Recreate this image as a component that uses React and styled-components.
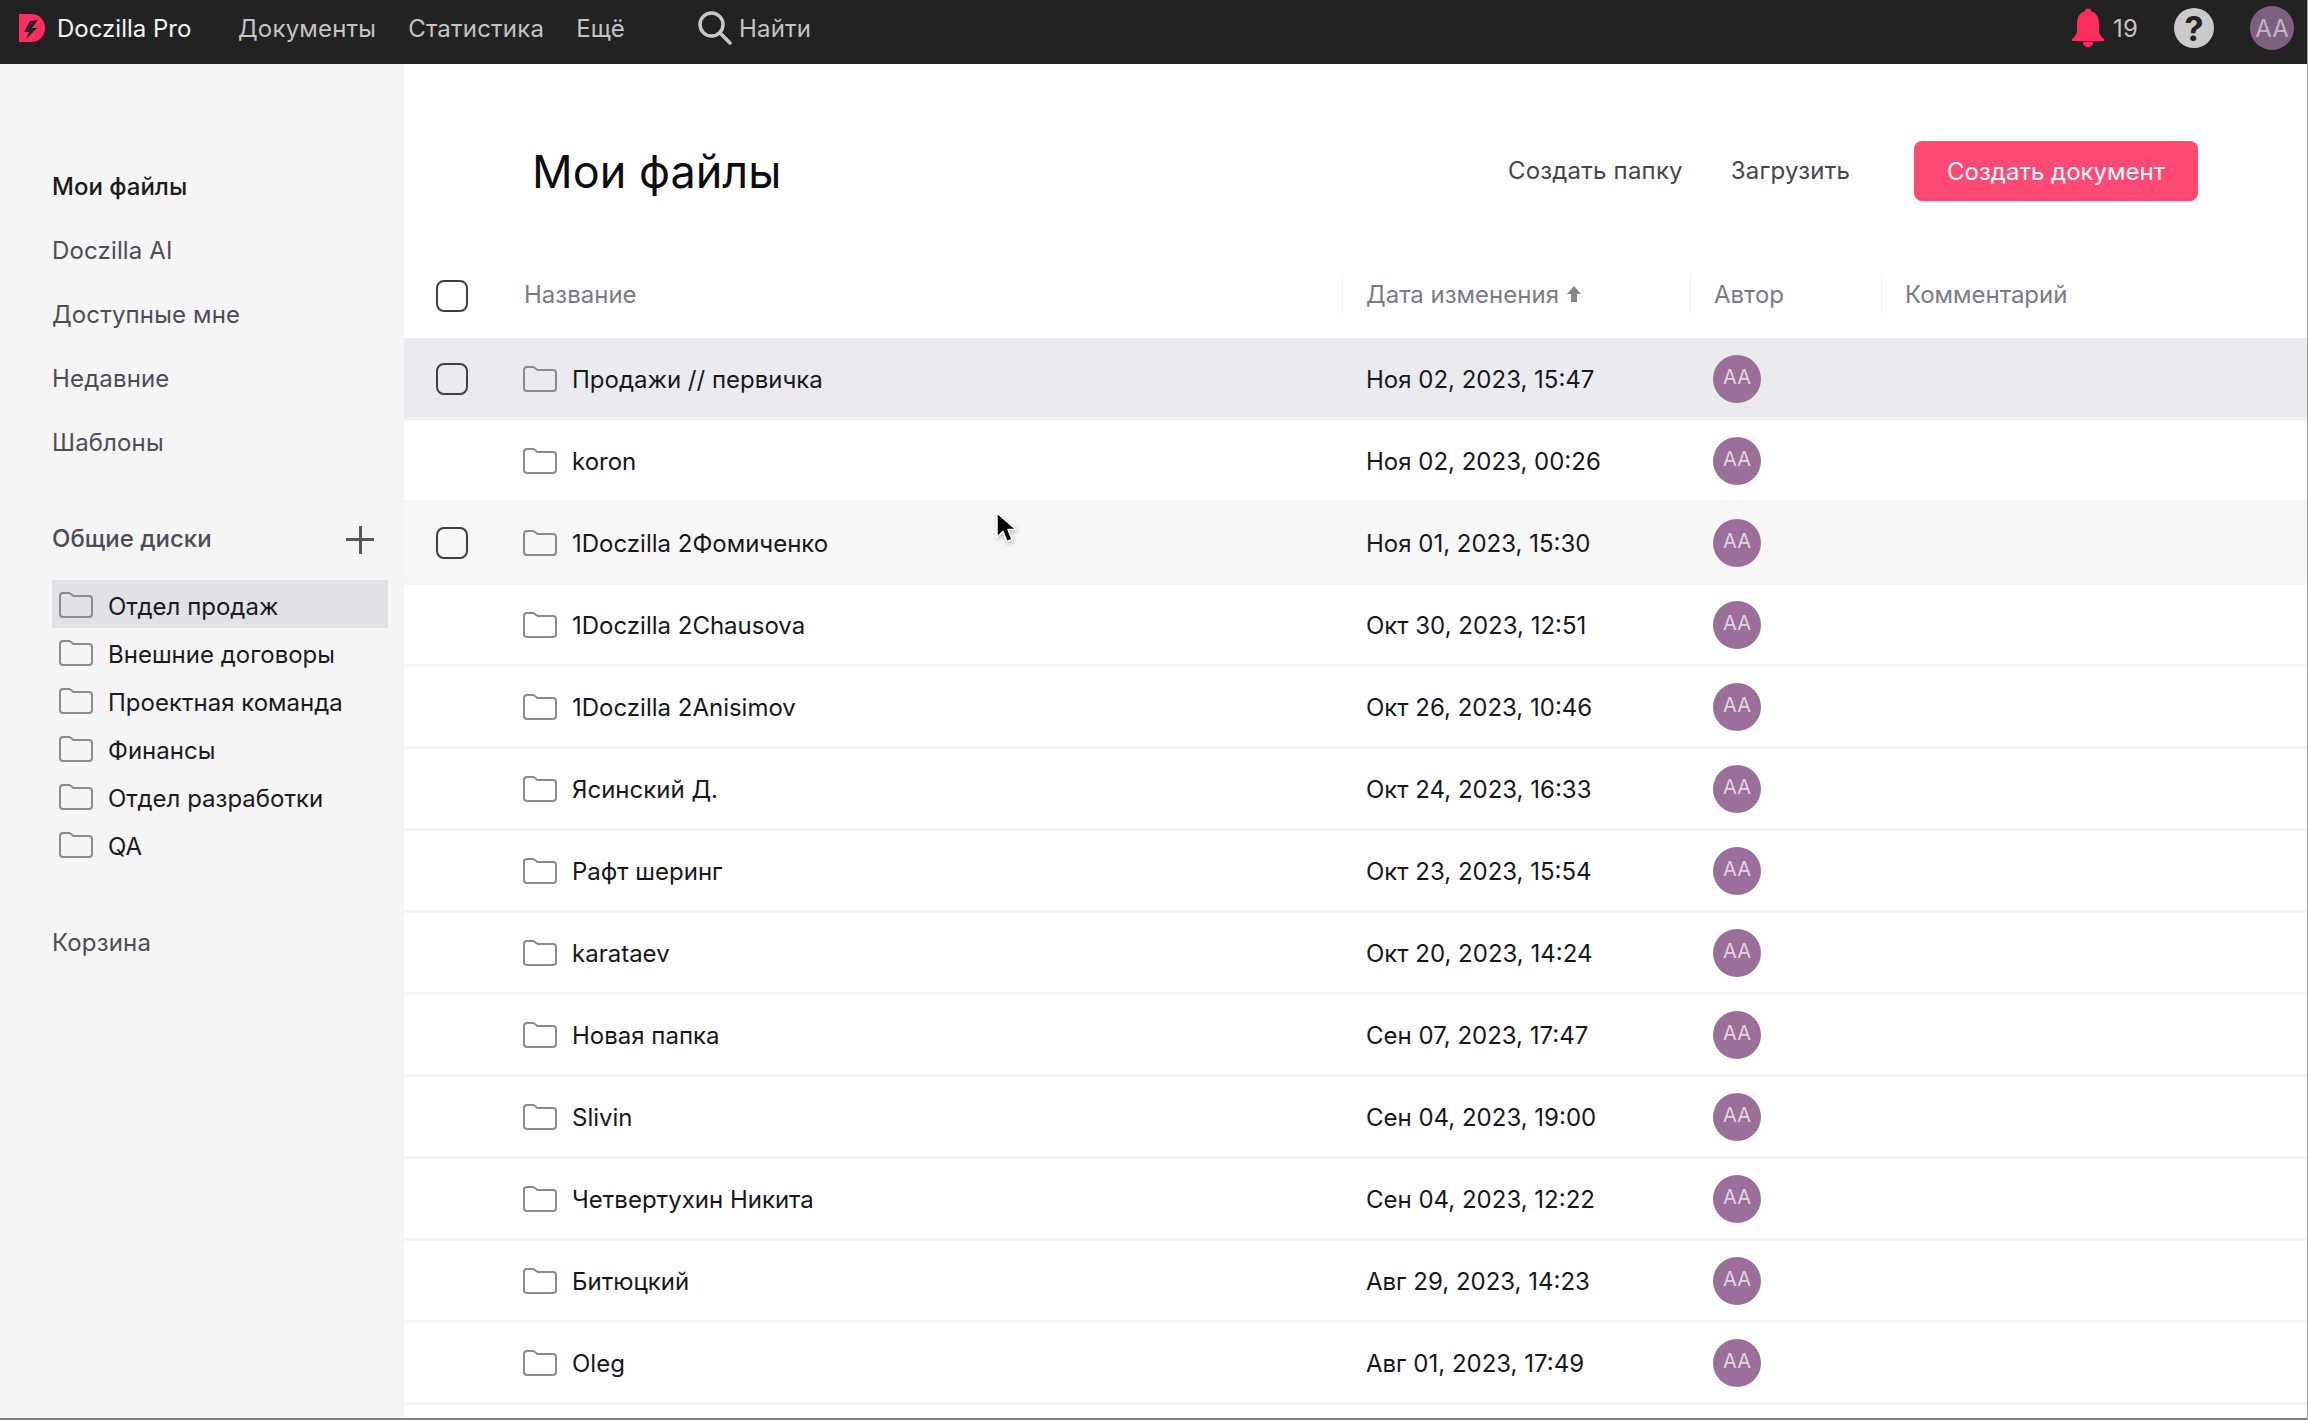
import React from 'react';
import styled, { createGlobalStyle } from 'styled-components';

const GlobalStyle = createGlobalStyle`
  html, body {
    margin: 0;
    padding: 0;
    background: #fff;
  }
  body {
    font-family: Inter, "Liberation Sans", sans-serif;
    overflow: hidden;
  }
  * {
    box-sizing: border-box;
  }
`;

const rows = [
  { name: 'Продажи // первичка', date: 'Ноя 02, 2023, 15:47', state: 'active' },
  { name: 'koron', date: 'Ноя 02, 2023, 00:26' },
  { name: '1Doczilla 2Фомиченко', date: 'Ноя 01, 2023, 15:30', state: 'hover' },
  { name: '1Doczilla 2Chausova', date: 'Окт 30, 2023, 12:51' },
  { name: '1Doczilla 2Anisimov', date: 'Окт 26, 2023, 10:46' },
  { name: 'Ясинский Д.', date: 'Окт 24, 2023, 16:33' },
  { name: 'Рафт шеринг', date: 'Окт 23, 2023, 15:54' },
  { name: 'karataev', date: 'Окт 20, 2023, 14:24' },
  { name: 'Новая папка', date: 'Сен 07, 2023, 17:47' },
  { name: 'Slivin', date: 'Сен 04, 2023, 19:00' },
  { name: 'Четвертухин Никита', date: 'Сен 04, 2023, 12:22' },
  { name: 'Битюцкий', date: 'Авг 29, 2023, 14:23' },
  { name: 'Oleg', date: 'Авг 01, 2023, 17:49' },
];

const navItems = ['Мои файлы', 'Doczilla AI', 'Доступные мне', 'Недавние', 'Шаблоны'];
const drives = ['Отдел продаж', 'Внешние договоры', 'Проектная команда', 'Финансы', 'Отдел разработки', 'QA'];

const FolderIcon = () => (
  <FolderSvg viewBox="0 0 34 26" fill="none">
    <path
      d="M1 4Q1 1 4 1h6.500l4 3H30q3 0 3 3v15q0 3-3 3H4q-3 0-3-3z"
      stroke="#8a8a92"
      strokeWidth="2"
      strokeLinejoin="round"
    />
  </FolderSvg>
);

const Logo = () => (
  <svg width="26" height="28" viewBox="0 0 26 28">
    <path d="M0 0h12c8 0 14 6 14 14s-6 14-14 14H0z" fill="#ff2d5f" />
    <path d="M19 6l-8 1-6 11h5l-3 7 11-11h-5z" fill="#222" />
  </svg>
);

const SearchIcon = () => (
  <svg width="36" height="36" viewBox="0 0 36 36" fill="none" stroke="#c9c9c9" strokeWidth="3.500" strokeLinecap="round">
    <circle cx="14.500" cy="14.500" r="11.500" />
    <path d="M23 23l10 10" />
  </svg>
);

const BellIcon = () => (
  <svg width="34" height="40" viewBox="0 0 34 40" fill="#ff2d5f">
    <circle cx="17" cy="4" r="3.500" />
    <path d="M17 3C9 3 6 9 6 16v6c0 4-2 7-5 9-1 .800-.500 2 .500 2h31c1 0 1.500-1.200.500-2-3-2-5-5-5-9v-6c0-7-3-13-11-13z" />
    <path d="M12 34h10c0 3-2 5-5 5s-5-2-5-5z" />
  </svg>
);

const CursorIcon = () => (
  <svg width="24" height="34" viewBox="0 0 24 34">
    <path
      d="M2 1v24l6-5.500 4 10 5-2-4-10h8z"
      fill="#000"
      stroke="#fff"
      strokeWidth="1.500"
      strokeLinejoin="round"
    />
  </svg>
);

export default function App() {
  return (
    <>
      <GlobalStyle />
      <Page>
        <TopBar>
          <Brand>
            <Logo />
            <BrandName>Doczilla Pro</BrandName>
          </Brand>
          <TopNav>
            <TopLink>Документы</TopLink>
            <TopLink>Статистика</TopLink>
            <TopLink>Ещё</TopLink>
          </TopNav>
          <Search>
            <SearchIcon />
            <TopLink>Найти</TopLink>
          </Search>
          <TopRight>
            <Notify>
              <BellIcon />
              <TopLink>19</TopLink>
            </Notify>
            <HelpCircle>?</HelpCircle>
            <TopAvatar>AA</TopAvatar>
          </TopRight>
        </TopBar>
        <Body>
          <Sidebar>
            <NavList>
              {navItems.map((item, i) => (
                <NavItem key={item} $active={i === 0}>{item}</NavItem>
              ))}
            </NavList>
            <DrivesHead>
              <span>Общие диски</span>
              <PlusIcon />
            </DrivesHead>
            <DriveList>
              {drives.map((d, i) => (
                <DriveItem key={d} $active={i === 0}>
                  <FolderIcon />
                  <DriveLabel>{d}</DriveLabel>
                </DriveItem>
              ))}
            </DriveList>
            <TrashItem>Корзина</TrashItem>
          </Sidebar>
          <Main>
            <PageHead>
              <Title>Мои файлы</Title>
              <Actions>
                <LinkButton>Создать папку</LinkButton>
                <LinkButton>Загрузить</LinkButton>
                <PrimaryButton>Создать документ</PrimaryButton>
              </Actions>
            </PageHead>
            <HeadRow>
              <CheckCell><HeadCheckbox /></CheckCell>
              <HeadCell $first>Название</HeadCell>
              <HeadCell $divider>
                Дата изменения
                <SortArrow viewBox="0 0 14 16">
                  <path d="M7 0l7 8H10v8H4V8H0z" fill="#85858c" />
                </SortArrow>
              </HeadCell>
              <HeadCell $divider>Автор</HeadCell>
              <HeadCell $divider>Комментарий</HeadCell>
            </HeadRow>
            {rows.map((row) => (
              <Row key={row.name} $state={row.state}>
                <CheckCell>{row.state && <Checkbox />}</CheckCell>
                <NameCell>
                  <FolderIcon />
                  <RowText>{row.name}</RowText>
                </NameCell>
                <DateCell><RowText>{row.date}</RowText></DateCell>
                <AuthorCell><Avatar>AA</Avatar></AuthorCell>
                <div />
              </Row>
            ))}
            <CursorMark><CursorIcon /></CursorMark>
          </Main>
        </Body>
      </Page>
    </>
  );
}

const Page = styled.div`
  width: 2308px;
  height: 1420px;
  display: flex;
  flex-direction: column;
  overflow: hidden;
  border-bottom: 2px solid #808080;
  border-right: 1px solid #9a9a9a;
`;

const TopBar = styled.header`
  flex: 0 0 64px;
  background: #222222;
  display: flex;
  align-items: center;
  padding: 0 13px 8px 19px;
`;

const Brand = styled.div`
  display: flex;
  align-items: center;
  gap: 12px;
  width: 219px;
`;

const BrandName = styled.span`
  color: #f4f4f4;
  font-size: 24px;
`;

const TopNav = styled.nav`
  display: flex;
  gap: 32px;
  width: 459px;
`;

const TopLink = styled.span`
  color: #c4c4c4;
  font-size: 24px;
  letter-spacing: 0.2px;
`;

const Search = styled.div`
  display: flex;
  align-items: center;
  gap: 6px;
`;

const TopRight = styled.div`
  margin-left: auto;
  display: flex;
  align-items: center;
`;

const Notify = styled.div`
  display: flex;
  align-items: center;
  gap: 8px;
  margin-right: 36px;
`;

const HelpCircle = styled.div`
  width: 40px;
  height: 40px;
  border-radius: 50%;
  background: #cacaca;
  color: #222;
  font-size: 34px;
  font-weight: 700;
  display: flex;
  align-items: center;
  justify-content: center;
  margin-right: 36px;
`;

const TopAvatar = styled.div`
  width: 44px;
  height: 44px;
  border-radius: 50%;
  background: #7e5f7f;
  color: #c4b5c4;
  font-size: 24px;
  display: flex;
  align-items: center;
  justify-content: center;
`;

const Body = styled.div`
  flex: 1;
  display: flex;
  min-height: 0;
`;

const Sidebar = styled.aside`
  flex: 0 0 404px;
  background: #f5f5f5;
  padding: 90px 16px 0 52px;
`;

const NavList = styled.div`
  display: flex;
  flex-direction: column;
`;

const NavItem = styled.div`
  height: 64px;
  display: flex;
  align-items: center;
  font-size: 24px;
  letter-spacing: ${(p) => (p.$active ? '0' : '0.15px')};
  font-weight: ${(p) => (p.$active ? 500 : 400)};
  color: ${(p) => (p.$active ? '#1a1a1f' : '#4d4d55')};
`;

const DrivesHead = styled.div`
  margin-top: 32px;
  height: 64px;
  display: flex;
  align-items: center;
  justify-content: space-between;
  font-size: 24px;
  font-weight: 500;
  color: #4d4d55;
  padding-right: 14px;
`;

const PlusIcon = styled.span`
  width: 28px;
  height: 28px;
  margin-top: 3px;
  background:
    linear-gradient(#55555c, #55555c) center / 28px 3px no-repeat,
    linear-gradient(#55555c, #55555c) center / 3px 28px no-repeat;
`;

const DriveList = styled.div`
  margin-top: 10px;
  display: flex;
  flex-direction: column;
`;

const FolderSvg = styled.svg`
  width: 34px;
  height: 26px;
  flex: none;
`;

const DriveItem = styled.div`
  height: 48px;
  display: flex;
  align-items: center;
  gap: 15px;
  padding: 2px 0 0 7px;
  font-size: 24px;
  color: #1a1a1f;
  background: ${(p) => (p.$active ? '#e1e1e6' : 'transparent')};
`;

const DriveLabel = styled.span`
  position: relative;
  top: 1px;
`;

const TrashItem = styled(NavItem)`
  margin-top: 42px;
  color: #4d4d55;
`;

const Main = styled.main`
  flex: 1;
  min-width: 0;
  position: relative;
  background: #fff;
  overflow: hidden;
`;

const PageHead = styled.div`
  height: 186px;
  padding: 77px 109px 0 128px;
  display: flex;
  align-items: flex-start;
  justify-content: space-between;
`;

const Title = styled.h1`
  margin: 0;
  font-size: 45px;
  font-weight: 400;
  line-height: 62px;
  color: #0d0d14;
`;

const Actions = styled.div`
  display: flex;
  align-items: center;
  gap: 48px;
`;

const LinkButton = styled.span`
  font-size: 24px;
  letter-spacing: 0.2px;
  color: #45454d;
  margin-top: -2px;
`;

const PrimaryButton = styled.button`
  height: 60px;
  width: 284px;
  margin-left: 16px;
  border: 0;
  border-radius: 8px;
  background: #ff4a75;
  color: #fff;
  font-family: inherit;
  font-size: 24px;
`;

const rowGrid = `
  display: grid;
  grid-template-columns: 119px 819px 348px 191px 1fr;
  align-items: center;
`;

const HeadRow = styled.div`
  ${rowGrid}
  height: 89px;
`;

const CheckCell = styled.div`
  padding-left: 32px;
  display: flex;
  align-items: center;
`;

const Checkbox = styled.span`
  display: block;
  width: 32px;
  height: 32px;
  border: 2px solid #3f3f48;
  border-radius: 8px;
`;

const HeadCheckbox = styled(Checkbox)`
  margin-top: 3px;
  background: #fff;
`;

const HeadCell = styled.div`
  height: 40px;
  margin-top: -1px;
  display: flex;
  align-items: center;
  font-size: 24px;
  color: #7b7b83;
  ${(p) => (p.$divider ? 'border-left: 1px solid #f0f0f2; padding-left: 23px;' : '')}
  ${(p) => (p.$first ? 'padding-left: 1px;' : '')}
`;

const SortArrow = styled.svg`
  width: 14px;
  height: 16px;
  margin-left: 8px;
`;

const Row = styled.div`
  ${rowGrid}
  height: 82px;
  border-bottom: 3px solid #f5f5f6;
  background: ${(p) => (p.$state === 'active' ? '#ebebef' : p.$state === 'hover' ? '#f7f7f8' : '#fff')};
  ${(p) => (p.$state === 'active' ? 'box-shadow: 0 -1px 0 #ebebef;' : '')}
`;

const NameCell = styled.div`
  display: flex;
  align-items: center;
  gap: 15px;
  font-size: 24px;
  color: #17171c;
`;

const RowText = styled.span`
  position: relative;
  top: 1px;
`;

const DateCell = styled.div`
  padding-left: 24px;
  font-size: 24px;
  color: #17171c;
`;

const AuthorCell = styled.div`
  padding-left: 23px;
`;

const Avatar = styled.div`
  width: 48px;
  height: 48px;
  border-radius: 50%;
  background: #9a6f99;
  color: #e3d3e2;
  font-size: 20px;
  display: flex;
  align-items: center;
  justify-content: center;
  padding-bottom: 4px;
`;

const CursorMark = styled.div`
  position: absolute;
  left: 591px;
  top: 448px;
  filter: drop-shadow(1px 2px 2px rgba(0, 0, 0, 0.25));
`;
